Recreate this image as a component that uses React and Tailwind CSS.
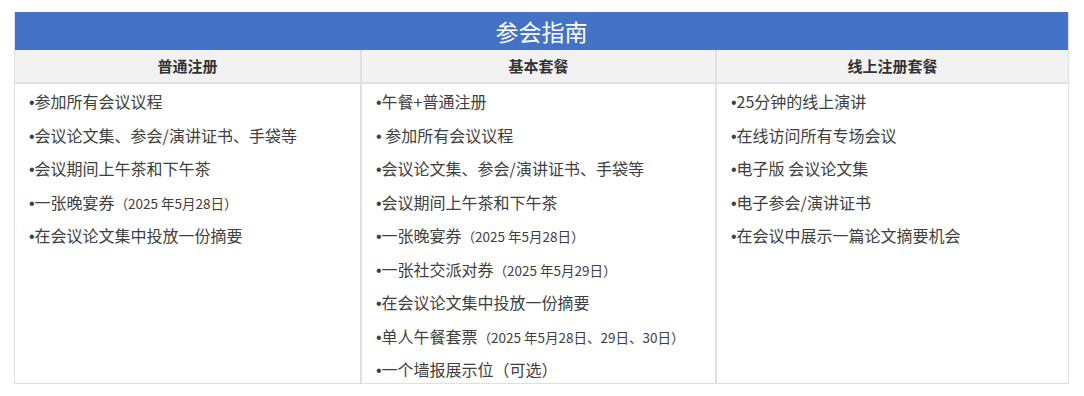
import React from 'react';

const columns = [
    {
        title: '普通注册',
        items: [
            ['参加所有会议议程'],
            ['会议论文集、参会/演讲证书、手袋等'],
            ['会议期间上午茶和下午茶'],
            ['一张晚宴券', '（2025 年5月28日）'],
            ['在会议论文集中投放一份摘要'],
        ],
    },
    {
        title: '基本套餐',
        items: [
            ['午餐+普通注册'],
            [' 参加所有会议议程'],
            ['会议论文集、参会/演讲证书、手袋等'],
            ['会议期间上午茶和下午茶'],
            ['一张晚宴券', '（2025 年5月28日）'],
            ['一张社交派对券', '（2025 年5月29日）'],
            ['在会议论文集中投放一份摘要'],
            ['单人午餐套票', '（2025 年5月28日、29日、30日）'],
            ['一个墙报展示位（可选）'],
        ],
    },
    {
        title: '线上注册套餐',
        items: [
            ['25分钟的线上演讲'],
            ['在线访问所有专场会议'],
            ['电子版 会议论文集'],
            ['电子参会/演讲证书'],
            ['在会议中展示一篇论文摘要机会'],
        ],
    },
];

const App = () => {
    return (
        <div className="w-[1084px] h-[396px] bg-white pt-[12px] pl-[14px]" style={{ fontFamily: '"Noto Sans CJK SC", "Noto Sans", sans-serif' }}>
            <div className="w-[1055px] border border-[#e0e0e0] border-t-0">
                {/* 标题 */}
                <div className="h-[38px] bg-[#4472c4] flex items-center justify-center text-white text-[23px] leading-none">
                    参会指南
                </div>

                {/* 表头 */}
                <div className="grid grid-cols-[345px_355px_353px] bg-[#f2f2f2] border-b-2 border-[#e0e0e0] h-[34px]">
                    {columns.map((col, i) => (
                        <div key={col.title} className={`flex items-center justify-center text-[15px] font-bold text-[#333] ${i > 0 ? 'border-l-2 border-[#e0e0e0]' : ''}`}>
                            {col.title}
                        </div>
                    ))}
                </div>

                {/* 内容 */}
                <div className="grid grid-cols-[345px_355px_353px] h-[299px]">
                    {columns.map((col, i) => (
                        <div key={col.title} className={`flex flex-col gap-[9.5px] pt-[5px] pl-[14px] text-[16px] text-[#404040] ${i > 0 ? 'border-l-2 border-[#e0e0e0]' : ''}`}>
                            {col.items.map((item, j) => (
                                <div key={j} className="h-6 flex items-baseline whitespace-pre leading-6">
                                    <span className="font-['Liberation_Sans',sans-serif]">•</span>
                                    <span>{item[0]}</span>
                                    {item[1] && <span className="text-[13.5px]">{item[1]}</span>}
                                </div>
                            ))}
                        </div>
                    ))}
                </div>
            </div>
        </div>
    );
};

export default App;
